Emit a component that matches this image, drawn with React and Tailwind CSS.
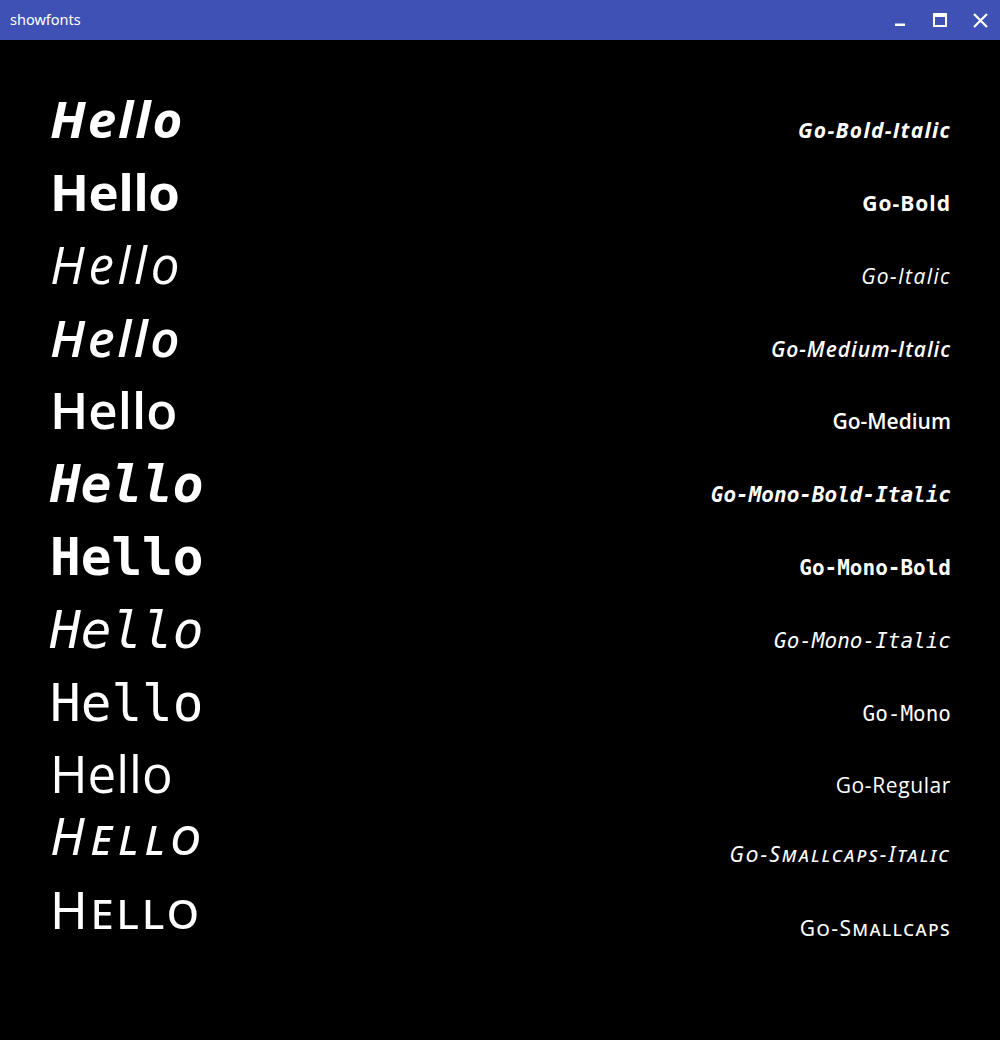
import React from 'react';

const SANS = "font-['Open_Sans','Noto_Sans',sans-serif]";
const NOTO = "font-['Noto_Sans','Open_Sans',sans-serif]";
const MONO = "font-['DejaVu_Sans_Mono','Liberation_Mono',monospace]";

// hello / label tracking tuned per row to get close to the Go font widths
const rows = [
  { label: 'Go-Bold-Italic', cls: `${SANS} font-bold italic`, h: 'h-[73px]', ht: 'tracking-[2px]', lt: 'tracking-[1.3px]' },
  { label: 'Go-Bold', cls: `${SANS} font-bold`, h: 'h-[73px]', ht: 'tracking-[-0.5px]', lt: 'tracking-[1px]' },
  { label: 'Go-Italic', cls: `${SANS} font-normal italic`, h: 'h-[73px]', ht: 'tracking-[3.7px]', lt: 'tracking-[1.4px]' },
  { label: 'Go-Medium-Italic', cls: `${SANS} font-semibold italic`, h: 'h-[72px]', ht: 'tracking-[2.5px]', lt: 'tracking-[0.9px]' },
  { label: 'Go-Medium', cls: `${SANS} font-semibold`, h: 'h-[73px]', ht: '', lt: '' },
  { label: 'Go-Mono-Bold-Italic', cls: `${MONO} font-bold italic`, h: 'h-[73px]', ht: '', lt: '', pt: 'pt-[2px]' },
  { label: 'Go-Mono-Bold', cls: `${MONO} font-bold`, h: 'h-[72px]', ht: '', lt: '', pt: 'pt-[2px]' },
  { label: 'Go-Mono-Italic', cls: `${MONO} font-normal italic`, h: 'h-[73px]', ht: '', lt: '', pt: 'pt-[3px]' },
  { label: 'Go-Mono', cls: `${MONO} font-normal`, h: 'h-[73px]', ht: '', lt: '', pt: 'pt-[3px]' },
  { label: 'Go-Regular', cls: `${SANS} font-normal`, h: 'h-[62px]', ht: '', lt: 'tracking-[0.6px]' },
  { label: 'Go-Smallcaps-Italic', cls: `${NOTO} font-normal italic [font-variant:small-caps]`, h: 'h-[74px]', ht: 'tracking-[6px]', lt: 'tracking-[2.2px]', sc: true },
  { label: 'Go-Smallcaps', cls: `${NOTO} font-normal [font-variant:small-caps]`, h: 'h-[74px]', ht: 'tracking-[3px]', lt: 'tracking-[1.5px]', sc: true },
];

function TitleBar() {
  return (
    <div className="h-[40px] bg-[#3f51b5] flex items-center justify-between pl-[10px] text-white">
      <span className="font-['Noto_Sans','Open_Sans',sans-serif] text-[14.5px] leading-none pb-[2px]">showfonts</span>
      <div className="flex items-center h-full">
        {/* minimize */}
        <div className="w-[40px] h-full flex items-center justify-center">
          <svg width="14" height="14" viewBox="0 0 14 14">
            <rect x="2" y="10.5" width="10" height="2.5" fill="white" />
          </svg>
        </div>
        {/* maximize */}
        <div className="w-[40px] h-full flex items-center justify-center">
          <svg width="14" height="14" viewBox="0 0 14 14">
            <rect x="1" y="1" width="12" height="12" fill="none" stroke="white" strokeWidth="2" />
            <rect x="1" y="1" width="12" height="3" fill="white" />
          </svg>
        </div>
        {/* close */}
        <div className="w-[40px] h-full flex items-center justify-center">
          <svg width="15" height="15" viewBox="0 0 15 15">
            <path d="M1 1 L14 14 M14 1 L1 14" stroke="white" strokeWidth="2.2" />
          </svg>
        </div>
      </div>
    </div>
  );
}

export default function App() {
  return (
    <div className="w-[1000px] h-[1040px] flex flex-col bg-black overflow-hidden">
      <TitleBar />
      <main className="flex-1 flex flex-col pt-[53px] pl-[50px] pr-[50px] text-white">
        {rows.map((r) => (
          <div key={r.label} className={`${r.h} ${r.pt || ''} flex items-baseline justify-between shrink-0`}>
            <span className={`${r.cls} ${r.ht} text-[51px] leading-none`}>Hello</span>
            <span className={`${r.cls} ${r.lt} text-[21px] leading-none mr-[-1px] ${r.sc ? 'translate-y-[7px]' : ''}`}>
              {r.label}
            </span>
          </div>
        ))}
      </main>
    </div>
  );
}
